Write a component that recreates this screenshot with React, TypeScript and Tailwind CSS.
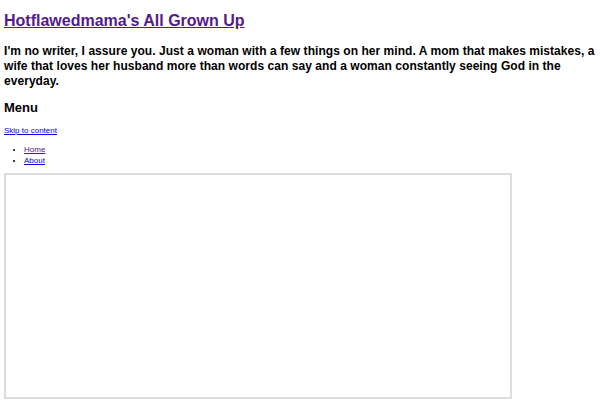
import React from 'react';

const App: React.FC = () => {
  return (
    <div className="min-h-screen bg-white text-black px-1 font-['Liberation_Sans',Arial,sans-serif]">
      {/* Header */}
      <h1 className="pt-[12px] text-[16px] font-bold leading-[18px]">
        <a href="#" className="text-[#551a8b] underline">Hotflawedmama's All Grown Up</a>
      </h1>
      <p className="mt-[14px] text-[12px] tracking-[0.05px] font-bold leading-[15px]">
        I'm no writer, I assure you. Just a woman with a few things on her mind. A mom that makes mistakes, a wife that loves her husband more than words can say and a woman constantly seeing God in the everyday.
      </p>

      {/* Navigation */}
      <h2 className="mt-[11px] text-[13px] font-bold leading-[15px]">Menu</h2>
      <a href="#" className="block mt-[11px] text-[8px] leading-[10px] text-[#0000ee] underline">Skip to content</a>
      <ul className="mt-[8px] ml-[20px] list-disc text-[8px] leading-[11px]">
        <li><a href="#" className="text-[#551a8b] underline">Home</a></li>
        <li><a href="#" className="text-[#0000ee] underline">About</a></li>
      </ul>

      {/* Content frame */}
      <div className="mt-[7px] w-[508px] h-[226px] border-2 border-[#dddddd]"></div>
    </div>
  );
};

export default App;
